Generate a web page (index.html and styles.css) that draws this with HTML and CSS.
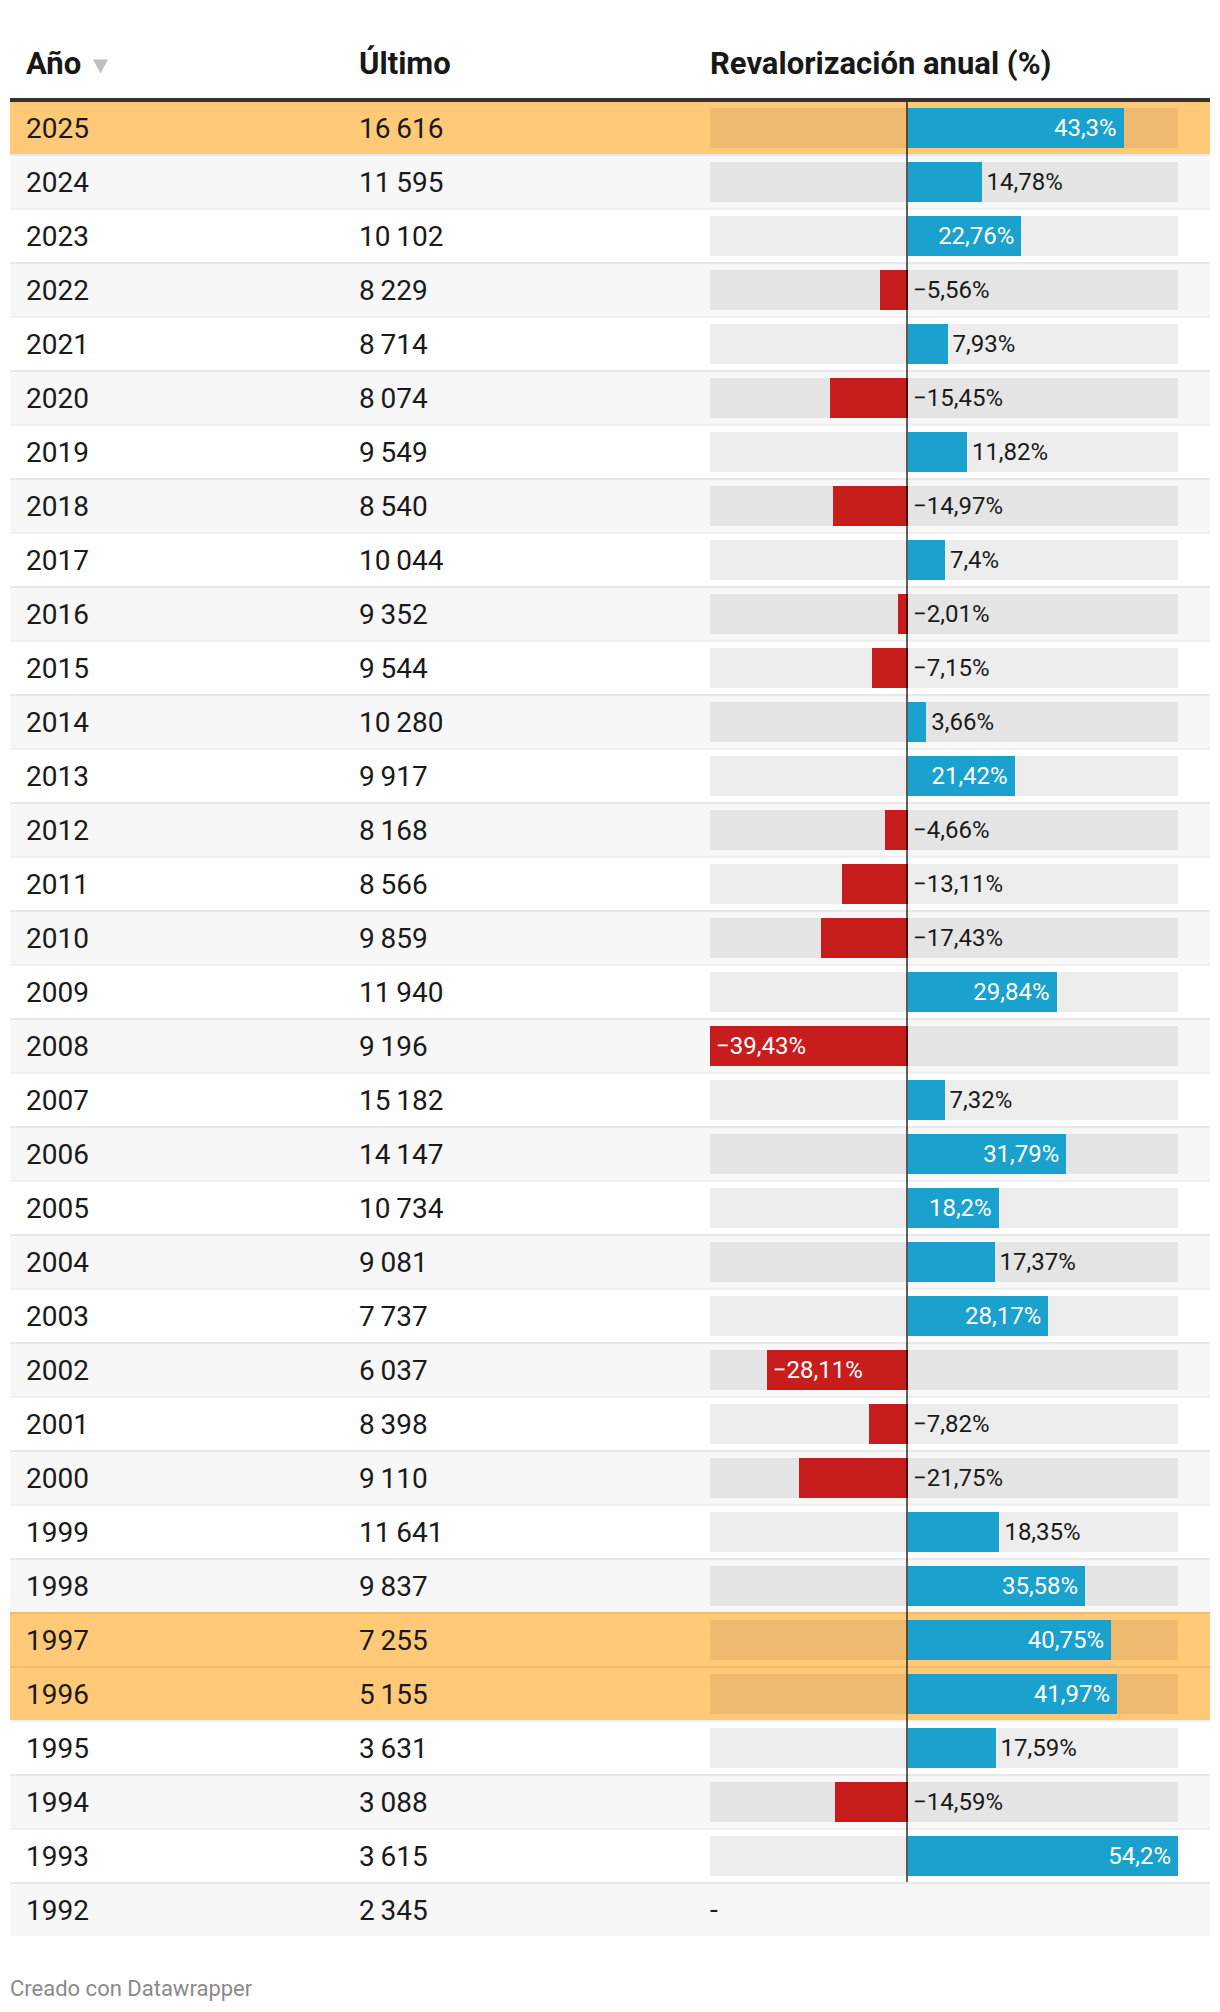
FILE: index.html
```html
<!DOCTYPE html>
<html lang="es">
<head>
<meta charset="utf-8">
<title>Revalorización anual</title>
<link rel="stylesheet" href="styles.css">
</head>
<body>
<div class="chart">
  <div class="table">
    <div class="thead">
      <div class="th">Año<svg class="sort" width="15" height="15" viewBox="0 0 15 15"><polygon points="0,0.5 15,0.5 7.5,14.5" fill="#bfbfbf"/></svg></div>
      <div class="th">Último</div>
      <div class="th">Revalorización anual (%)</div>
    </div>
    <div class="tbody">
      <div class="tr hl first"><div class="td">2025</div><div class="td">16&thinsp;616</div><div class="td bc"><div class="track"><div class="bar pos in" style="width:215.7px"><span>43,3%</span></div><div class="zero"></div></div></div></div>
      <div class="tr"><div class="td">2024</div><div class="td">11&thinsp;595</div><div class="td bc"><div class="track"><div class="bar pos out" style="width:73.6px"><span>14,78%</span></div><div class="zero"></div></div></div></div>
      <div class="tr"><div class="td">2023</div><div class="td">10&thinsp;102</div><div class="td bc"><div class="track"><div class="bar pos in" style="width:113.4px"><span>22,76%</span></div><div class="zero"></div></div></div></div>
      <div class="tr"><div class="td">2022</div><div class="td">8&thinsp;229</div><div class="td bc"><div class="track"><div class="bar neg out" style="width:27.9px"><span>−5,56%</span></div><div class="zero"></div></div></div></div>
      <div class="tr"><div class="td">2021</div><div class="td">8&thinsp;714</div><div class="td bc"><div class="track"><div class="bar pos out" style="width:39.5px"><span>7,93%</span></div><div class="zero"></div></div></div></div>
      <div class="tr"><div class="td">2020</div><div class="td">8&thinsp;074</div><div class="td bc"><div class="track"><div class="bar neg out" style="width:77.6px"><span>−15,45%</span></div><div class="zero"></div></div></div></div>
      <div class="tr"><div class="td">2019</div><div class="td">9&thinsp;549</div><div class="td bc"><div class="track"><div class="bar pos out" style="width:58.9px"><span>11,82%</span></div><div class="zero"></div></div></div></div>
      <div class="tr"><div class="td">2018</div><div class="td">8&thinsp;540</div><div class="td bc"><div class="track"><div class="bar neg out" style="width:75.2px"><span>−14,97%</span></div><div class="zero"></div></div></div></div>
      <div class="tr"><div class="td">2017</div><div class="td">10&thinsp;044</div><div class="td bc"><div class="track"><div class="bar pos out" style="width:36.9px"><span>7,4%</span></div><div class="zero"></div></div></div></div>
      <div class="tr"><div class="td">2016</div><div class="td">9&thinsp;352</div><div class="td bc"><div class="track"><div class="bar neg out" style="width:10.1px"><span>−2,01%</span></div><div class="zero"></div></div></div></div>
      <div class="tr"><div class="td">2015</div><div class="td">9&thinsp;544</div><div class="td bc"><div class="track"><div class="bar neg out" style="width:35.9px"><span>−7,15%</span></div><div class="zero"></div></div></div></div>
      <div class="tr"><div class="td">2014</div><div class="td">10&thinsp;280</div><div class="td bc"><div class="track"><div class="bar pos out" style="width:18.2px"><span>3,66%</span></div><div class="zero"></div></div></div></div>
      <div class="tr"><div class="td">2013</div><div class="td">9&thinsp;917</div><div class="td bc"><div class="track"><div class="bar pos in" style="width:106.7px"><span>21,42%</span></div><div class="zero"></div></div></div></div>
      <div class="tr"><div class="td">2012</div><div class="td">8&thinsp;168</div><div class="td bc"><div class="track"><div class="bar neg out" style="width:23.4px"><span>−4,66%</span></div><div class="zero"></div></div></div></div>
      <div class="tr"><div class="td">2011</div><div class="td">8&thinsp;566</div><div class="td bc"><div class="track"><div class="bar neg out" style="width:65.8px"><span>−13,11%</span></div><div class="zero"></div></div></div></div>
      <div class="tr"><div class="td">2010</div><div class="td">9&thinsp;859</div><div class="td bc"><div class="track"><div class="bar neg out" style="width:87.5px"><span>−17,43%</span></div><div class="zero"></div></div></div></div>
      <div class="tr"><div class="td">2009</div><div class="td">11&thinsp;940</div><div class="td bc"><div class="track"><div class="bar pos in" style="width:148.6px"><span>29,84%</span></div><div class="zero"></div></div></div></div>
      <div class="tr"><div class="td">2008</div><div class="td">9&thinsp;196</div><div class="td bc"><div class="track"><div class="bar neg in" style="width:198px"><span>−39,43%</span></div><div class="zero"></div></div></div></div>
      <div class="tr"><div class="td">2007</div><div class="td">15&thinsp;182</div><div class="td bc"><div class="track"><div class="bar pos out" style="width:36.5px"><span>7,32%</span></div><div class="zero"></div></div></div></div>
      <div class="tr"><div class="td">2006</div><div class="td">14&thinsp;147</div><div class="td bc"><div class="track"><div class="bar pos in" style="width:158.4px"><span>31,79%</span></div><div class="zero"></div></div></div></div>
      <div class="tr"><div class="td">2005</div><div class="td">10&thinsp;734</div><div class="td bc"><div class="track"><div class="bar pos in" style="width:90.7px"><span>18,2%</span></div><div class="zero"></div></div></div></div>
      <div class="tr"><div class="td">2004</div><div class="td">9&thinsp;081</div><div class="td bc"><div class="track"><div class="bar pos out" style="width:86.5px"><span>17,37%</span></div><div class="zero"></div></div></div></div>
      <div class="tr"><div class="td">2003</div><div class="td">7&thinsp;737</div><div class="td bc"><div class="track"><div class="bar pos in" style="width:140.3px"><span>28,17%</span></div><div class="zero"></div></div></div></div>
      <div class="tr"><div class="td">2002</div><div class="td">6&thinsp;037</div><div class="td bc"><div class="track"><div class="bar neg in" style="width:141.2px"><span>−28,11%</span></div><div class="zero"></div></div></div></div>
      <div class="tr"><div class="td">2001</div><div class="td">8&thinsp;398</div><div class="td bc"><div class="track"><div class="bar neg out" style="width:39.3px"><span>−7,82%</span></div><div class="zero"></div></div></div></div>
      <div class="tr"><div class="td">2000</div><div class="td">9&thinsp;110</div><div class="td bc"><div class="track"><div class="bar neg out" style="width:109.2px"><span>−21,75%</span></div><div class="zero"></div></div></div></div>
      <div class="tr"><div class="td">1999</div><div class="td">11&thinsp;641</div><div class="td bc"><div class="track"><div class="bar pos out" style="width:91.4px"><span>18,35%</span></div><div class="zero"></div></div></div></div>
      <div class="tr"><div class="td">1998</div><div class="td">9&thinsp;837</div><div class="td bc"><div class="track"><div class="bar pos in" style="width:177.2px"><span>35,58%</span></div><div class="zero"></div></div></div></div>
      <div class="tr hl"><div class="td">1997</div><div class="td">7&thinsp;255</div><div class="td bc"><div class="track"><div class="bar pos in" style="width:203px"><span>40,75%</span></div><div class="zero"></div></div></div></div>
      <div class="tr hl"><div class="td">1996</div><div class="td">5&thinsp;155</div><div class="td bc"><div class="track"><div class="bar pos in" style="width:209.1px"><span>41,97%</span></div><div class="zero"></div></div></div></div>
      <div class="tr"><div class="td">1995</div><div class="td">3&thinsp;631</div><div class="td bc"><div class="track"><div class="bar pos out" style="width:87.6px"><span>17,59%</span></div><div class="zero"></div></div></div></div>
      <div class="tr"><div class="td">1994</div><div class="td">3&thinsp;088</div><div class="td bc"><div class="track"><div class="bar neg out" style="width:73.3px"><span>−14,59%</span></div><div class="zero"></div></div></div></div>
      <div class="tr"><div class="td">1993</div><div class="td">3&thinsp;615</div><div class="td bc"><div class="track"><div class="bar pos in" style="width:270px"><span>54,2%</span></div><div class="zero"></div></div></div></div>
      <div class="tr"><div class="td">1992</div><div class="td">2&thinsp;345</div><div class="td bc"><div class="empty">-</div></div></div>
    </div>
  </div>
  <div class="footer">Creado con Datawrapper</div>
</div>
</body>
</html>
```
FILE: styles.css
```css
* { box-sizing: border-box; }

body {
  margin: 0;
  background: #ffffff;
  font-family: Roboto, "Liberation Sans", Arial, sans-serif;
  color: #1a1a1a;
}

.chart {
  padding: 0 10px;
}

.thead,
.tr {
  display: grid;
  grid-template-columns: 333px 351px 1fr;
}

.thead {
  border-bottom: 4px solid #333333;
}

.th {
  height: 98px;
  padding: 46px 16px 16px;
  font-size: 31px;
  font-weight: 700;
  line-height: 36px;
  white-space: nowrap;
  color: #181818;
}

.sort {
  display: inline-block;
  margin-left: 12px;
  vertical-align: 0;
}

.tr {
  border-top: 2px solid rgba(0, 0, 0, 0.06);
  background: #ffffff;
}

.tr.first {
  border-top: 0;
}

.tbody .tr:nth-child(even) {
  background: #f7f7f7;
}

.tbody .tr.hl {
  background: #ffc978;
}

.td {
  display: flex;
  align-items: center;
  height: 52px;
  padding: 0 16px;
  font-size: 28px;
  line-height: normal;
  white-space: nowrap;
}

.td.bc {
  padding: 6px 32px 6px 16px;
}

.track {
  position: relative;
  width: 100%;
  height: 40px;
  background: rgba(0, 0, 0, 0.07);
}

.bar {
  position: absolute;
  top: 0;
  bottom: 0;
  display: flex;
  align-items: center;
  font-size: 24px;
  line-height: 1;
  white-space: nowrap;
}

.bar.pos {
  left: 198px;
  background: #1ba1ce;
}

.bar.neg {
  right: 270px;
  background: #c71e1d;
}

.bar.in span {
  color: #ffffff;
}

.bar.pos.in {
  justify-content: flex-end;
  padding-right: 7px;
}

.bar.neg.in {
  justify-content: flex-start;
  padding-left: 6px;
}

.bar.out span {
  position: absolute;
  left: 100%;
  margin-left: 5px;
  color: #1a1a1a;
}

.zero {
  position: absolute;
  left: 196px;
  width: 2px;
  top: -8px;
  bottom: -6px;
  background: rgba(0, 0, 0, 0.62);
  z-index: 2;
}

.tr.first .zero {
  top: -6px;
}

.empty {
  font-size: 28px;
  line-height: 40px;
}

.footer {
  margin-top: 40px;
  font-size: 22px;
  line-height: normal;
  color: #8a8a8a;
}
```
